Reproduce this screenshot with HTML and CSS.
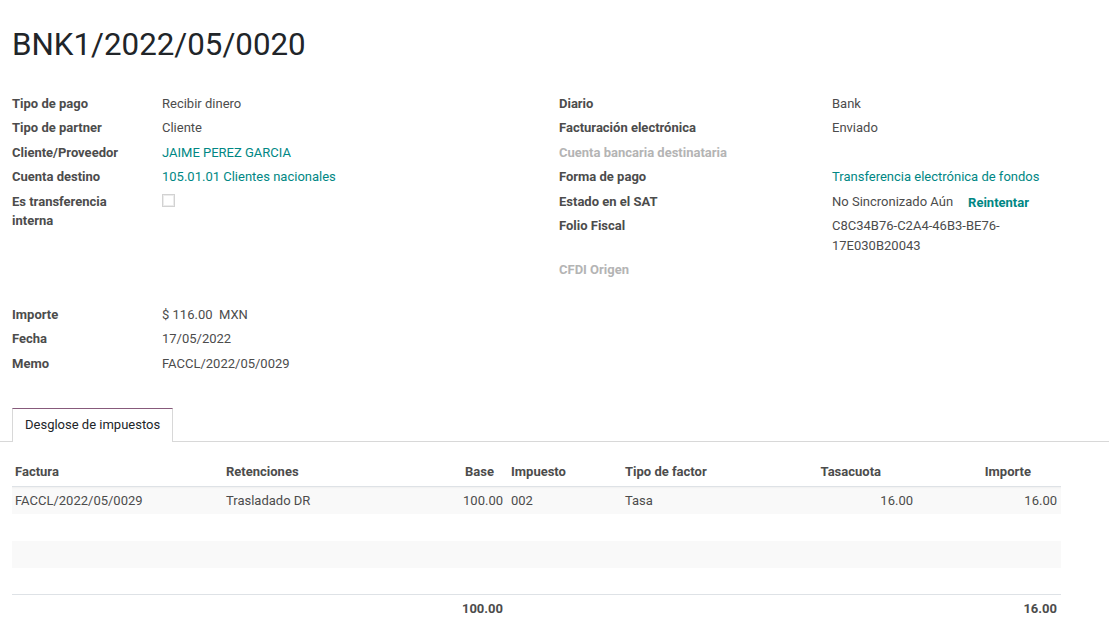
FILE: index.html
```html
<!DOCTYPE html>
<html lang="es">
<head>
<meta charset="utf-8">
<title>BNK1/2022/05/0020</title>
<link rel="stylesheet" href="styles.css">
</head>
<body>
<div class="sheet">
  <h1 class="title">BNK1/2022/05/0020</h1>

  <div class="columns">
    <div class="group group-left">
      <div class="lbl">Tipo de pago</div><div class="val">Recibir dinero</div>
      <div class="lbl">Tipo de partner</div><div class="val">Cliente</div>
      <div class="lbl">Cliente/Proveedor</div><div class="val link">JAIME PEREZ GARCIA</div>
      <div class="lbl">Cuenta destino</div><div class="val link">105.01.01 Clientes nacionales</div>
      <div class="lbl">Es transferencia interna</div><div class="val"><span class="checkbox"></span></div>
    </div>
    <div class="group group-right">
      <div class="lbl">Diario</div><div class="val">Bank</div>
      <div class="lbl">Facturación electrónica</div><div class="val">Enviado</div>
      <div class="lbl muted">Cuenta bancaria destinataria</div><div class="val"></div>
      <div class="lbl">Forma de pago</div><div class="val link">Transferencia electrónica de fondos</div>
      <div class="lbl">Estado en el SAT</div><div class="val">No Sincronizado Aún<span class="btn-link">Reintentar</span></div>
      <div class="lbl">Folio Fiscal</div><div class="val">C8C34B76-C2A4-46B3-BE76-17E030B20043</div>
      <div class="lbl muted">CFDI Origen</div><div class="val"></div>
    </div>
  </div>

  <div class="group group-left group-second">
    <div class="lbl">Importe</div><div class="val">$&nbsp;116.00&nbsp; MXN</div>
    <div class="lbl">Fecha</div><div class="val">17/05/2022</div>
    <div class="lbl">Memo</div><div class="val">FACCL/2022/05/0029</div>
  </div>

  <div class="notebook">
    <div class="tabs">
      <div class="tab active">Desglose de impuestos</div>
    </div>
  </div>

  <table class="lines">
    <colgroup>
      <col class="c-fact"><col class="c-ret"><col class="c-base"><col class="c-imp"><col class="c-tipo"><col class="c-tasa"><col class="c-importe">
    </colgroup>
    <thead>
      <tr>
        <th>Factura</th>
        <th>Retenciones</th>
        <th class="num h-base">Base</th>
        <th>Impuesto</th>
        <th>Tipo de factor</th>
        <th class="num h-tasa">Tasacuota</th>
        <th class="num h-importe">Importe</th>
      </tr>
    </thead>
    <tbody>
      <tr class="stripe">
        <td>FACCL/2022/05/0029</td>
        <td>Trasladado DR</td>
        <td class="num">100.00</td>
        <td>002</td>
        <td>Tasa</td>
        <td class="num">16.00</td>
        <td class="num">16.00</td>
      </tr>
      <tr><td></td><td></td><td></td><td></td><td></td><td></td><td></td></tr>
      <tr class="stripe"><td></td><td></td><td></td><td></td><td></td><td></td><td></td></tr>
      <tr><td></td><td></td><td></td><td></td><td></td><td></td><td></td></tr>
    </tbody>
    <tfoot>
      <tr>
        <td></td><td></td><td class="num">100.00</td><td></td><td></td><td></td><td class="num">16.00</td>
      </tr>
    </tfoot>
  </table>
</div>
</body>
</html>
```

FILE: styles.css
```css
html, body {
  margin: 0;
  padding: 0;
  background: #ffffff;
}

body {
  font-family: Roboto, "Noto Sans", "Liberation Sans", sans-serif;
  font-size: 13px;
  color: #4c4c4c;
  overflow: hidden;
}

.sheet {
  padding: 26px 12px 0 12px;
}

.title {
  margin: 0;
  font-size: 31.3px;
  font-weight: 400;
  line-height: 37px;
  color: #212529;
}

.columns {
  display: grid;
  grid-template-columns: 547px 1fr;
  margin-top: 28px;
}

.group {
  display: grid;
  align-content: start;
  line-height: 19.5px;
}

.group-left {
  grid-template-columns: 150px 1fr;
}

.group-right {
  grid-template-columns: 273px 1fr;
}

.group-second {
  width: 547px;
  margin-top: 20px;
}

.lbl {
  font-weight: 700;
  color: #4c4c4c;
  padding: 2.5px 16px 2.5px 0;
}

.lbl.muted {
  color: #b4b4b4;
}

.val {
  padding: 2.5px 36px 2.5px 0;
  color: #4c4c4c;
  min-height: 19.5px;
}

.link {
  color: #008784;
}

.btn-link {
  color: #008784;
  font-weight: 700;
  margin-left: 15px;
  position: relative;
  top: 1px;
}

.checkbox {
  display: inline-block;
  width: 11px;
  height: 11px;
  border: 1px solid #d2d2d2;
  box-shadow: inset 0 0 0 1px #ececec;
  background: #fff;
  vertical-align: middle;
  margin-top: -3px;
}

.notebook {
  margin: 32px -12px 0 -12px;
  padding-left: 12px;
  border-bottom: 1px solid #d8d8d8;
}

.tabs {
  display: flex;
}

.tab {
  height: 32px;
  line-height: 32px;
  padding: 0 12px;
  color: #212529;
  background: #fff;
  border: 1px solid #d8d8d8;
  border-top: 1px solid #875a7b;
  border-bottom: none;
  margin-bottom: -1px;
  padding-bottom: 1px;
}

.lines {
  margin-top: 18px;
  width: 1049px;
  border-collapse: collapse;
  table-layout: fixed;
}

.c-fact { width: 210px; }
.c-ret { width: 208px; }
.c-base { width: 77px; }
.c-imp { width: 114px; }
.c-tipo { width: 140px; }
.c-tasa { width: 156px; }
.c-importe { width: 144px; }

.lines th,
.lines td {
  height: 27px;
  padding: 0 4px 0 3px;
  text-align: left;
  white-space: nowrap;
  box-sizing: border-box;
}

.lines th {
  font-weight: 700;
  color: #4c4c4c;
  border-bottom: 1px solid #dee2e6;
  padding-bottom: 2px;
}

.lines td {
  color: #4c4c4c;
}

.lines td:nth-child(2),
.lines th:nth-child(2),
.lines td:nth-child(4),
.lines td:nth-child(5),
.lines th:nth-child(4),
.lines th:nth-child(5) {
  padding-left: 4px;
}

.lines .num {
  text-align: right;
}

.lines th.h-base { padding-right: 13px; }
.lines th.h-tasa { padding-right: 36px; }
.lines th.h-importe { padding-right: 30px; }

.lines tr.stripe td {
  background: #f9f9f9;
}

.lines tbody tr:first-child td {
  box-shadow: inset 0 3px 3px -3px rgba(0, 0, 0, 0.08);
}

.lines tfoot td {
  border-top: 1px solid #dee2e6;
  font-weight: 700;
  height: 28px;
}
```
